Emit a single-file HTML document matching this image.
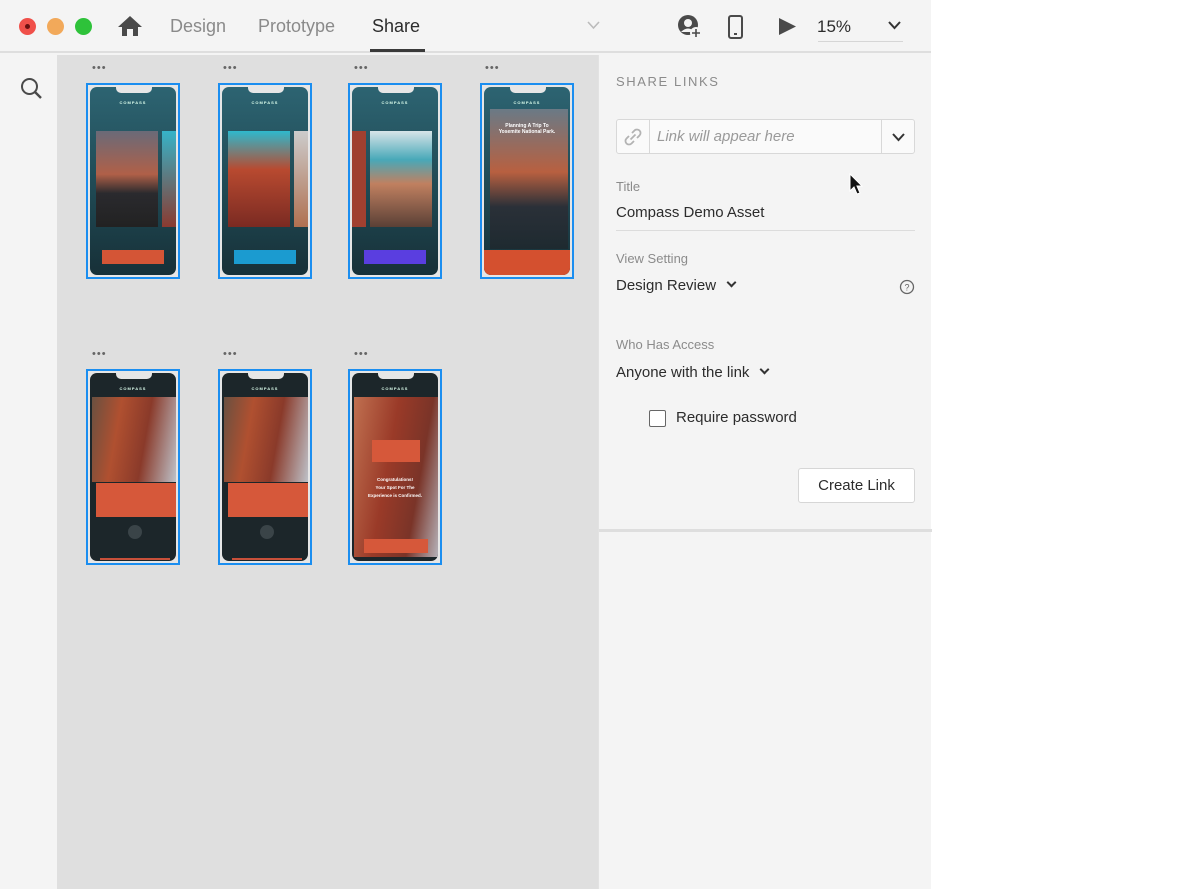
<!DOCTYPE html>
<html><head><meta charset="utf-8"><style>
*{margin:0;padding:0;box-sizing:border-box}
body{width:1200px;height:889px;background:#fff;font-family:"Liberation Sans",sans-serif;position:relative;overflow:hidden}
.win{position:absolute;left:0;top:0;width:931px;height:889px;background:#f4f4f4}
.top{position:absolute;left:0;top:0;width:931px;height:53px;background:#f4f4f4;border-bottom:2px solid #dedede}
.dot{position:absolute;top:18px;width:17px;height:17px;border-radius:50%}
.tab{position:absolute;top:16px;font-size:18px;color:#8a8a8a}
.side{position:absolute;left:0;top:55px;width:57px;height:834px;background:#f4f4f4}
.canvas{position:absolute;left:57px;top:55px;width:541px;height:834px;background:#dfdfdf}
.panel{position:absolute;left:598px;top:55px;width:333px;height:834px;background:#f4f4f4;border-left:1px solid #e2e2e2}
.ph{position:absolute;width:94px;height:196px;border:2px solid #1b8ef0;background:#e6e6e6;padding:2px}
.ph .in{position:relative;width:100%;height:100%;border-radius:7px;overflow:hidden;background:linear-gradient(#2d6472,#1e4650 60%,#173038)}
.notch{position:absolute;left:26px;top:0;width:36px;height:6px;background:#e6e6e6;border-radius:0 0 5px 5px}
.ttl{position:absolute;top:13px;left:0;width:100%;text-align:center;color:#dfe;font-size:4px;letter-spacing:1px;font-weight:bold}
.mm{position:absolute;left:0;top:0;right:0;color:#fff;font-size:4px;text-align:center}
.dots{position:absolute;font-size:11px;color:#666;letter-spacing:1px;line-height:6px}
.lbl{position:absolute;left:17px;font-size:13px;color:#8b8b8b}
.val{position:absolute;left:17px;font-size:15px;color:#2c2c2c}
.chev{display:inline-block;width:7px;height:7px;border-right:2px solid #333;border-bottom:2px solid #333;transform:rotate(45deg);margin-left:12px;position:relative;top:-4px}
</style></head><body>
<div class="win">
<div class="top">
 <div class="dot" style="left:19px;background:#f0504a"><div style="width:5px;height:5px;background:#6a1010;border-radius:50%;margin:6px"></div></div>
 <div class="dot" style="left:47px;background:#f2a95a"></div>
 <div class="dot" style="left:75px;background:#2ec23a"></div>
 <svg style="position:absolute;left:117px;top:15px" width="26" height="22" viewBox="0 0 26 22"><path d="M13 1 L25 12 H21 V21 H16 V14 H10 V21 H5 V12 H1 Z" fill="#4a4a4a"/></svg>
 <div class="tab" style="left:170px">Design</div>
 <div class="tab" style="left:258px">Prototype</div>
 <div class="tab" style="left:372px;color:#2c2c2c">Share</div>
 <div style="position:absolute;left:370px;top:49px;width:55px;height:3px;background:#3a3a3a"></div>
 <svg style="position:absolute;left:587px;top:21px" width="13" height="9"><path d="M1 1 L6.5 7 L12 1" stroke="#bbb" stroke-width="1.6" fill="none"/></svg>
 <svg style="position:absolute;left:677px;top:14px" width="26" height="26" viewBox="0 0 26 26"><circle cx="11" cy="11" r="10" fill="#4a4a4a"/><circle cx="11" cy="9" r="4" fill="#f4f4f4"/><path d="M4 18 Q11 11 18 18" fill="#f4f4f4"/><circle cx="19" cy="19" r="6" fill="#f4f4f4"/><path d="M19 15 V23 M15 19 H23" stroke="#4a4a4a" stroke-width="1.6"/></svg>
 <svg style="position:absolute;left:728px;top:15px" width="15" height="24"><rect x="1" y="1" width="13" height="22" rx="2" fill="none" stroke="#4a4a4a" stroke-width="2"/><rect x="6" y="18" width="3" height="2" fill="#4a4a4a"/></svg>
 <svg style="position:absolute;left:778px;top:17px" width="19" height="19"><path d="M1 1 L18 9.5 L1 18 Z" fill="#4a4a4a"/></svg>
 <div style="position:absolute;left:817px;top:17px;font-size:17px;color:#2c2c2c">15%</div>
 <div style="position:absolute;left:818px;top:41px;width:85px;height:1px;background:#d6d6d6"></div>
 <svg style="position:absolute;left:888px;top:21px" width="13" height="9"><path d="M1 1 L6.5 7 L12 1" stroke="#333" stroke-width="2" fill="none"/></svg>
</div>
<div class="side"><svg style="position:absolute;left:20px;top:22px" width="23" height="23"><circle cx="9.5" cy="9.5" r="7.5" fill="none" stroke="#4a4a4a" stroke-width="2"/><path d="M15 15 L21 21" stroke="#4a4a4a" stroke-width="2.4"/></svg></div>
<div class="canvas"></div>
<div class="panel">
 <div style="position:absolute;left:17px;top:19px;font-size:13px;letter-spacing:1.6px;color:#8b8b8b">SHARE LINKS</div>
 <div style="position:absolute;left:17px;top:64px;width:299px;height:35px;border:1px solid #d8d8d8;border-radius:3px;background:#fafafa">
  <div style="position:absolute;left:0;top:0;width:33px;height:33px;border-right:1px solid #d8d8d8"></div>
  <svg style="position:absolute;left:6px;top:7px" width="20" height="20" viewBox="0 0 20 20"><g fill="none" stroke="#b3b3b3" stroke-width="1.8"><path d="M9 6 L11.5 3.5 a3 3 0 0 1 5 5 L14 11"/><path d="M11 14 L8.5 16.5 a3 3 0 0 1 -5 -5 L6 9"/><path d="M7.5 12.5 L12.5 7.5"/></g></svg>
  <div style="position:absolute;left:40px;top:8px;font-size:15px;font-style:italic;color:#9a9a9a">Link will appear here</div>
  <div style="position:absolute;left:264px;top:0;width:1px;height:33px;background:#d8d8d8"></div>
  <svg style="position:absolute;left:275px;top:13px" width="13" height="9"><path d="M1 1 L6.5 7 L12 1" stroke="#333" stroke-width="2" fill="none"/></svg>
 </div>
 <div class="lbl" style="top:124px">Title</div>
 <div class="val" style="top:149px">Compass Demo Asset</div>
 <div style="position:absolute;left:17px;top:175px;width:299px;height:1px;background:#dcdcdc"></div>
 <div class="lbl" style="top:196px">View Setting</div>
 <div class="val" style="top:222px">Design Review<span class="chev"></span></div>
 <svg style="position:absolute;left:300px;top:224px" width="16" height="16"><circle cx="8" cy="8" r="6.5" fill="none" stroke="#666" stroke-width="1.3"/><text x="8" y="11.5" font-size="9" text-anchor="middle" fill="#666" font-family="Liberation Sans">?</text></svg>
 <div class="lbl" style="top:282px">Who Has Access</div>
 <div class="val" style="top:309px">Anyone with the link<span class="chev"></span></div>
 <div style="position:absolute;left:50px;top:355px;width:17px;height:17px;border:1.5px solid #666;border-radius:2px;background:#fff"></div>
 <div style="position:absolute;left:77px;top:354px;font-size:15px;color:#2c2c2c">Require password</div>
 <div style="position:absolute;left:199px;top:413px;width:117px;height:35px;border:1px solid #d6d6d6;border-radius:3px;background:#fff;font-size:15px;color:#2c2c2c;text-align:center;line-height:33px">Create Link</div>
 <div style="position:absolute;left:0;top:474px;width:333px;height:3px;background:#dedede"></div>
</div>
</div>

<div class="dots" style="left:92px;top:65px">•••</div><div class="dots" style="left:223px;top:65px">•••</div><div class="dots" style="left:354px;top:65px">•••</div><div class="dots" style="left:485px;top:65px">•••</div>
<div class="dots" style="left:92px;top:351px">•••</div><div class="dots" style="left:223px;top:351px">•••</div><div class="dots" style="left:354px;top:351px">•••</div>

<div class="ph" style="left:86px;top:83px"><div class="in"><div class="notch"></div><div class="ttl">COMPASS</div>
<div style="position:absolute;left:6px;top:44px;width:62px;height:96px;background:linear-gradient(#6a6a78,#b06048 45%,#2a2a2e 65%,#222)"></div>
<div style="position:absolute;left:72px;top:44px;width:20px;height:96px;background:linear-gradient(#36b3c8,#8a3a30)"></div>
<div style="position:absolute;left:12px;top:163px;width:62px;height:14px;background:#d45536"></div></div></div>

<div class="ph" style="left:218px;top:83px"><div class="in"><div class="notch"></div><div class="ttl">COMPASS</div>
<div style="position:absolute;left:6px;top:44px;width:62px;height:96px;background:linear-gradient(#2fb8cc,#b84a30 40%,#7a2a22)"></div>
<div style="position:absolute;left:72px;top:44px;width:20px;height:96px;background:linear-gradient(#ccc,#b07050)"></div>
<div style="position:absolute;left:12px;top:163px;width:62px;height:14px;background:#1b9bd0"></div></div></div>

<div class="ph" style="left:348px;top:83px"><div class="in"><div class="notch"></div><div class="ttl">COMPASS</div>
<div style="position:absolute;left:0;top:44px;width:14px;height:96px;background:#a04030"></div>
<div style="position:absolute;left:18px;top:44px;width:62px;height:96px;background:linear-gradient(#d8e4e8,#48a8b8 30%,#c08060 55%,#5a4036)"></div>
<div style="position:absolute;left:12px;top:163px;width:62px;height:14px;background:#5a3ee0"></div></div></div>

<div class="ph" style="left:480px;top:83px"><div class="in"><div class="notch"></div><div class="ttl">COMPASS</div>
<div style="position:absolute;left:6px;top:22px;width:78px;height:140px;background:linear-gradient(#6a7a86,#b86040 45%,#2a3038 70%,#1e2a30)"></div>
<div class="mm" style="top:36px;font-size:5px;font-weight:bold">Planning A Trip To<br>Yosemite National Park.</div>
<div style="position:absolute;left:0;top:163px;width:100%;height:30px;background:#d4502f"></div></div></div>

<div class="ph" style="left:86px;top:369px"><div class="in" style="background:#1c262a"><div class="notch"></div><div class="ttl">COMPASS</div>
<div style="position:absolute;left:2px;top:24px;width:86px;height:85px;background:linear-gradient(100deg,#6a5040,#b05030 30%,#8a3a2a 60%,#c0c8d0)"></div>
<div style="position:absolute;left:6px;top:110px;width:80px;height:34px;background:#d6583a"></div>
<div style="position:absolute;left:38px;top:152px;width:14px;height:14px;border-radius:50%;background:#3a4448"></div>
<div style="position:absolute;left:10px;top:185px;width:70px;height:2px;background:#c8503a"></div></div></div>

<div class="ph" style="left:218px;top:369px"><div class="in" style="background:#1c262a"><div class="notch"></div><div class="ttl">COMPASS</div>
<div style="position:absolute;left:2px;top:24px;width:86px;height:85px;background:linear-gradient(100deg,#6a5040,#b05030 30%,#8a3a2a 60%,#c0c8d0)"></div>
<div style="position:absolute;left:6px;top:110px;width:80px;height:34px;background:#d6583a"></div>
<div style="position:absolute;left:38px;top:152px;width:14px;height:14px;border-radius:50%;background:#3a4448"></div>
<div style="position:absolute;left:10px;top:185px;width:70px;height:2px;background:#c8503a"></div></div></div>

<div class="ph" style="left:348px;top:369px"><div class="in" style="background:#1c262a"><div class="notch"></div><div class="ttl">COMPASS</div>
<div style="position:absolute;left:2px;top:24px;width:86px;height:160px;background:linear-gradient(100deg,#c07050,#9a3a28 40%,#7a3428 70%,#b8b8c0)"></div>
<div style="position:absolute;left:20px;top:67px;width:48px;height:22px;background:#d6583a"></div>
<div class="mm" style="top:103px;font-size:4.5px;font-weight:bold;line-height:8px">Congratulations!<br>Your Spot For The<br>Experience is Confirmed.</div>
<div style="position:absolute;left:12px;top:166px;width:64px;height:14px;background:#d6583a"></div></div></div>

<svg style="position:absolute;left:848px;top:172px" width="16" height="24"><path d="M2 2 L2 19 L6 15 L9 22 L12 21 L9 14 L14 14 Z" fill="#111" stroke="#fff" stroke-width="1"/></svg>
</body></html>
